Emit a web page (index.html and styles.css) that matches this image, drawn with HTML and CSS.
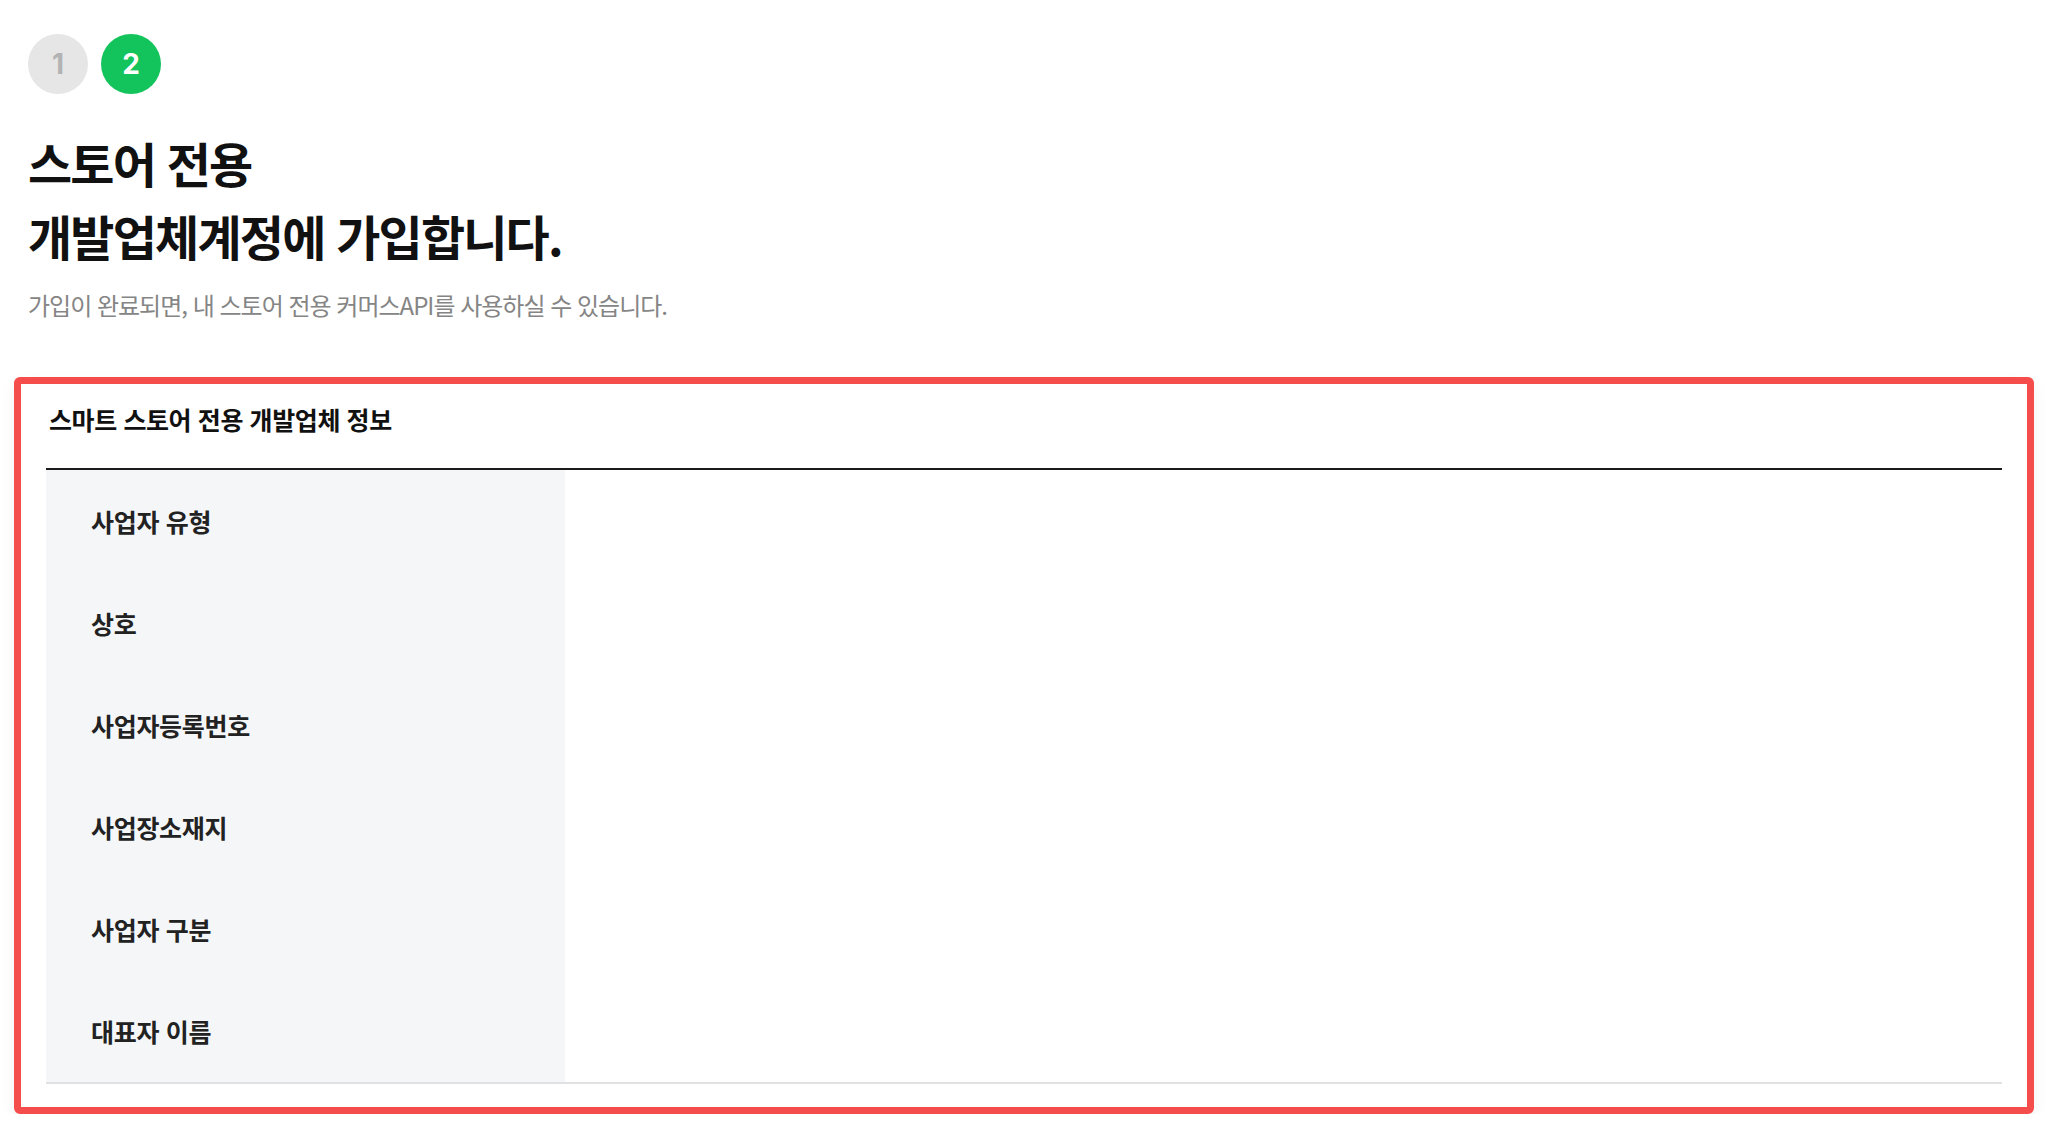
FILE: index.html
```html
<!DOCTYPE html>
<html lang="ko">
<head>
<meta charset="utf-8">
<title>개발업체계정 가입</title>
<link rel="stylesheet" href="styles.css">
</head>
<body>
<div class="page">
  <div class="steps">
    <span class="step step-done">1</span>
    <span class="step step-active">2</span>
  </div>
  <h1 class="title">스토어 전용<br>개발업체계정에 가입합니다.</h1>
  <p class="subtitle">가입이 완료되면, 내 스토어 전용 커머스API를 사용하실 수 있습니다.</p>
</div>
<section class="panel">
  <h2 class="panel-title">스마트 스토어 전용 개발업체 정보</h2>
  <div class="table">
    <div class="row"><div class="label">사업자 유형</div><div class="value"></div></div>
    <div class="row"><div class="label">상호</div><div class="value"></div></div>
    <div class="row"><div class="label">사업자등록번호</div><div class="value"></div></div>
    <div class="row"><div class="label">사업장소재지</div><div class="value"></div></div>
    <div class="row"><div class="label">사업자 구분</div><div class="value"></div></div>
    <div class="row"><div class="label">대표자 이름</div><div class="value"></div></div>
  </div>
</section>
</body>
</html>
```
FILE: styles.css
```css
html, body {
  margin: 0;
  padding: 0;
  background: #ffffff;
}
body {
  font-family: "Noto Sans CJK KR", "Noto Sans", sans-serif;
  color: #111;
}
.page {
  padding: 34px 0 0 28px;
}
.steps {
  display: flex;
  gap: 13px;
}
.step {
  width: 60px;
  height: 60px;
  border-radius: 50%;
  display: flex;
  align-items: center;
  justify-content: center;
  font-family: "Inter", "Noto Sans", sans-serif;
  font-weight: 700;
  font-size: 28px;
}
.step-done {
  background: #e6e6e6;
  color: #b3b3b3;
}
.step-active {
  background: #13c35c;
  color: #ffffff;
}
.title {
  margin: 32px 0 0 0;
  font-size: 48px;
  line-height: 73px;
  font-weight: 700;
  letter-spacing: -1.8px;
  color: #111;
}
.subtitle {
  margin: 16px 0 0 0;
  font-size: 24px;
  line-height: 34px;
  font-weight: 400;
  letter-spacing: -1px;
  color: #858585;
}
.panel {
  margin: 55px 14px 0 14px;
  border: 7px solid #f54c4c;
  border-radius: 6px;
  padding: 0 25px 23px 25px;
  box-shadow: 0 6px 16px rgba(0, 0, 0, 0.06);
}
.panel-title {
  margin: 0;
  padding: 17px 0 31px 3px;
  font-size: 25px;
  line-height: 36px;
  font-weight: 700;
  letter-spacing: -0.4px;
  color: #111;
  border-bottom: 2px solid #1b1b1b;
}
.table {
  border-bottom: 2px solid #e0e1e3;
}
.row {
  display: grid;
  grid-template-columns: 519px 1fr;
  height: 102px;
}
.label {
  background: #f5f6f8;
  display: flex;
  align-items: center;
  padding-left: 45px;
  font-size: 25px;
  font-weight: 700;
  letter-spacing: -0.3px;
  color: #222;
}
.value {
  background: #ffffff;
}
```
